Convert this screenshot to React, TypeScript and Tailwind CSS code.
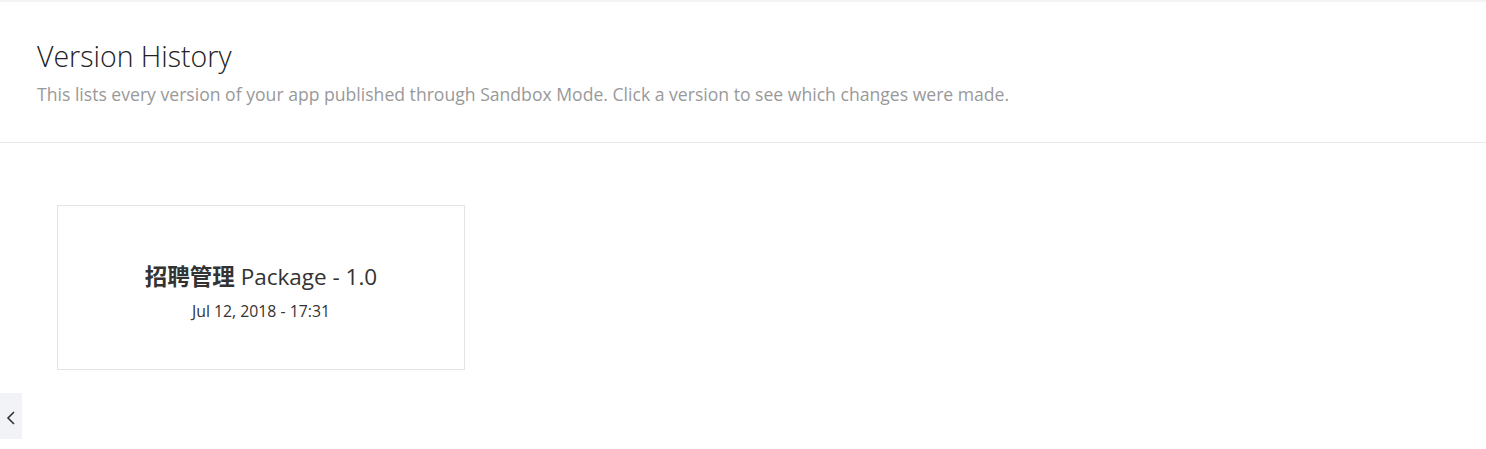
export default function App() {
  return (
    <div className="relative h-[449px] w-full bg-white font-['Open_Sans',_'Noto_Sans_CJK_TC',_sans-serif] overflow-hidden">
      <div className="h-[2px] bg-[#f4f4f4]" />

      {/* Header */}
      <div className="border-b border-[#e8e8e8] px-[37px] pt-[37px] pb-[37px]">
        <h1 className="text-[28.5px] font-light leading-[34px] text-[#222]">Version History</h1>
        <p className="mt-[10px] text-[17.6px] leading-[22px] text-[#999]">
          This lists every version of your app published through Sandbox Mode. Click a version to see which changes were made.
        </p>
      </div>

      {/* Versions */}
      <div className="px-[57px] pt-[62px]">
        <div className="flex h-[165px] w-[408px] cursor-pointer flex-col items-center justify-center border border-[#e4e4e4] bg-white pt-[9px]">
          <div className="text-[22.5px] font-medium leading-[26px] text-[#333]">
            <span className="font-bold">招聘管理</span> Package - 1.0
          </div>
          <div className="mt-[11px] text-[15.8px] leading-[20px] text-[#333]">Jul 12, 2018 - 17:31</div>
        </div>
      </div>

      {/* Side toggle */}
      <button className="absolute left-0 top-[393px] flex h-[46px] w-[22px] items-center justify-center bg-[#f2f3f7]">
        <svg width="10" height="16" viewBox="0 0 10 16" fill="none" className="mt-[3px]">
          <path d="M8 2L2 8l6 6" stroke="#333" strokeWidth="1.6" />
        </svg>
      </button>
    </div>
  );
}
